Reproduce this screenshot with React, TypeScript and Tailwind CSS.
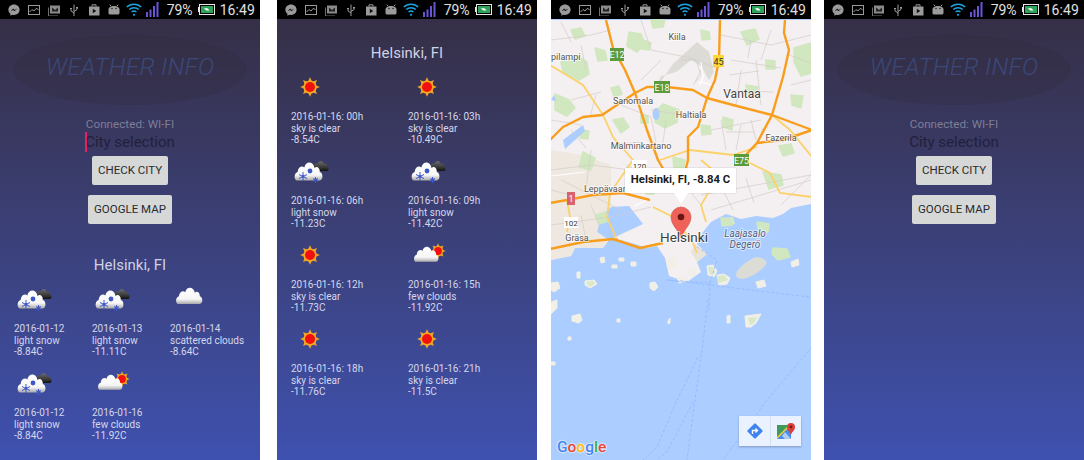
import type { ReactNode } from "react";

const font = { fontFamily: "Roboto, sans-serif" };

function StatusBar() {
  return (
    <div className="flex h-[19px] shrink-0 items-center bg-black pl-[8px] pr-[5px]">
      <div className="flex items-center gap-[8px]">
        <svg width="12" height="12" viewBox="0 0 12 12">
          <path d="M6 .5C2.8.5.4 2.8.4 5.7c0 1.6.7 3 2 4v2l1.9-1c.5.1 1.1.2 1.7.2 3.2 0 5.6-2.3 5.6-5.2S9.2.5 6 .5z" fill="#9b9b9b" />
          <path d="M2.6 7.3 5.2 4.6l1.5 1.4 2.6-1.4L6.7 7.3 5.2 5.9z" fill="#111" />
        </svg>
        <svg width="12" height="12" viewBox="0 0 12 12" fill="none">
          <rect x=".5" y="1.5" width="11" height="9" stroke="#9b9b9b" />
          <path d="M1.5 8 4 5.5l2 1.5 2-2.5 2.5 1" stroke="#9b9b9b" />
        </svg>
        <svg width="12" height="12" viewBox="0 0 12 12">
          <path d="M2 1.5h10v8H2z" fill="#8b8b8b" />
          <path d="M0 3.5h1v8h9v1H0z" fill="#6f6f6f" />
          <path d="M4 3.5v4h6v-4L7 6z" fill="#222" />
        </svg>
        <svg width="12" height="12" viewBox="0 0 12 12" fill="none" stroke="#9b9b9b">
          <path d="M6 .5V12M6 9 3 7V4.5M6 7.5l3-2V4" />
          <path d="M2 4h2v1H2zM8 3h2v1.5H8z" fill="#9b9b9b" stroke="none" />
        </svg>
        <svg width="12" height="12" viewBox="0 0 12 12">
          <path d="M4 2.5V.8h4v1.7" fill="none" stroke="#9b9b9b" />
          <path d="M1 2.5h10.5v9H1z" fill="#9b9b9b" />
          <path d="M4.8 4.8 8.3 7 4.8 9.2z" fill="#111" />
        </svg>
        <svg width="12" height="12" viewBox="0 0 12 12">
          <path d="M3 2 1.8.6M9 2 10.2.6" stroke="#9b9b9b" />
          <path d="M.5 5.5C.5 3.5 3 2 6 2s5.500 1.500 5.500 3.500V9c0 1-1 1.500-2 1.500H2.500c-1 0-2-.5-2-1.500z" fill="#9b9b9b" />
          <circle cx="4" cy="4.5" r=".7" fill="#111" />
          <circle cx="8" cy="4.5" r=".7" fill="#111" />
        </svg>
      </div>
      <div className="ml-auto flex items-center">
        <svg width="16" height="15" viewBox="0 0 16 15" fill="none" stroke="#1ba3dd" strokeWidth="1.5">
          <path d="M.8 5C4.600 1.300 11.400 1.300 15.200 5" />
          <path d="M3.200 7.500c2.600-2.500 7-2.500 9.600 0" />
          <path d="M5.600 10c1.300-1.100 3.500-1.100 4.800 0" />
          <circle cx="8" cy="12.8" r="1.1" fill="#1ba3dd" stroke="none" />
        </svg>
        <svg className="ml-[4px]" width="13" height="15" viewBox="0 0 13 15" fill="#6a55d8">
          <rect x="0" y="10" width="2" height="5" />
          <rect x="3.5" y="7.5" width="2" height="7.5" />
          <rect x="7" y="4" width="2" height="11" />
          <rect x="10.5" y="0" width="2" height="15" />
        </svg>
        <span className="ml-[8px] text-[14px] leading-none text-[#e0e0e0]" style={font}>79%</span>
        <svg className="ml-[5px]" width="17" height="11" viewBox="0 0 17 11">
          <rect x="1.5" y=".5" width="15" height="10" fill="none" stroke="#e8e8e8" />
          <rect x="0" y="3" width="1.5" height="5" fill="#e8e8e8" />
          <rect x="3" y="2" width="12" height="7" fill="#2fa35a" />
          <path d="M6 4.200h3.500L11.500 6.500H8.500L6.500 5z" fill="#fff" />
        </svg>
        <span className="ml-[5px] text-[14px] leading-none tracking-[0.1px] text-[#e0e0e0]" style={font}>16:49</span>
      </div>
    </div>
  );
}

const cloudPath =
  "M3 18C0 18-.5 12.500 3.500 11.500 4 7.500 8 6.500 10 8 11.500 3 18.500 3 20 8.500 22 6.500 25.500 8.500 25 11.500 28.500 12 28.500 18 25 18z";

function Cloud({ x, y, sx, sy, fill = "url(#cloudFill)" }: { x: number; y: number; sx: number; sy: number; fill?: string }) {
  return (
    <g transform={`translate(${x} ${y}) scale(${sx} ${sy})`}>
      <path d={cloudPath} fill={fill} />
    </g>
  );
}

function SnowIcon() {
  return (
    <svg width="40" height="30" viewBox="0 0 40 30">
      <Cloud x={20.5} y={0.7} sx={0.62} sy={0.74} fill="url(#darkFill)" />
      <Cloud x={3} y={0} sx={1.03} sy={1.3} />
      <g stroke="#4057c8" strokeWidth="1">
        <path d="M12 15v9M8 17.500l8 4M8 21.500l8-4" />
        <path d="M24.500 20v6M22 21.500l5 3M22 24.500l5-3" />
      </g>
      <circle cx="19" cy="14" r="2.4" fill="#4057c8" />
      <circle cx="24.5" cy="23" r="1.8" fill="#4057c8" />
      <circle cx="12" cy="19.500" r="1.4" fill="#4057c8" />
    </svg>
  );
}

function Sun({ cx, cy, s = 1 }: { cx: number; cy: number; s?: number }) {
  const rays = [0, 45, 90, 135, 180, 225, 270, 315];
  return (
    <g transform={`translate(${cx} ${cy}) scale(${s})`}>
      {rays.map((r) => (
        <path key={r} d="M-2 -5.500 0 -9.800 2 -5.500z" fill="#f2a42a" transform={`rotate(${r})`} />
      ))}
      <circle r="6.6" fill="#f7a81f" />
      <circle r="5" fill="#f01010" />
    </g>
  );
}

function SunIcon() {
  return (
    <svg width="40" height="30" viewBox="0 0 40 30">
      <Sun cx={19} cy={14} />
    </svg>
  );
}

function FewCloudsIcon() {
  return (
    <svg width="40" height="30" viewBox="0 0 40 30">
      <Sun cx={30} cy={10} s={0.78} />
      <Cloud x={5.5} y={1} sx={0.9} sy={1.1} />
    </svg>
  );
}

function CloudIcon() {
  return (
    <svg width="40" height="30" viewBox="0 0 40 30">
      <Cloud x={5.5} y={-2.3} sx={0.97} sy={1.18} />
    </svg>
  );
}

type Forecast = { icon: "snow" | "sun" | "cloud" | "few"; date: string; sky: string; temp: string };

const daily: Forecast[] = [
  { icon: "snow", date: "2016-01-12", sky: "light snow", temp: "-8.84C" },
  { icon: "snow", date: "2016-01-13", sky: "light snow", temp: "-11.11C" },
  { icon: "cloud", date: "2016-01-14", sky: "scattered clouds", temp: "-8.64C" },
  { icon: "snow", date: "2016-01-12", sky: "light snow", temp: "-8.84C" },
  { icon: "few", date: "2016-01-16", sky: "few clouds", temp: "-11.92C" },
];

const hourly: Forecast[] = [
  { icon: "sun", date: "2016-01-16: 00h", sky: "sky is clear", temp: "-8.54C" },
  { icon: "sun", date: "2016-01-16: 03h", sky: "sky is clear", temp: "-10.49C" },
  { icon: "snow", date: "2016-01-16: 06h", sky: "light snow", temp: "-11.23C" },
  { icon: "snow", date: "2016-01-16: 09h", sky: "light snow", temp: "-11.42C" },
  { icon: "sun", date: "2016-01-16: 12h", sky: "sky is clear", temp: "-11.73C" },
  { icon: "few", date: "2016-01-16: 15h", sky: "few clouds", temp: "-11.92C" },
  { icon: "sun", date: "2016-01-16: 18h", sky: "sky is clear", temp: "-11.76C" },
  { icon: "sun", date: "2016-01-16: 21h", sky: "sky is clear", temp: "-11.5C" },
];

function ForecastItem({ item }: { item: Forecast }) {
  return (
    <div>
      <div className="h-[30px]">
        {item.icon === "snow" && <SnowIcon />}
        {item.icon === "sun" && <SunIcon />}
        {item.icon === "cloud" && <CloudIcon />}
        {item.icon === "few" && <FewCloudsIcon />}
      </div>
      <div className="mt-[8px] whitespace-nowrap text-[10px] leading-[11.5px] text-[#d5d7ec]">
        <div>{item.date}</div>
        <div>{item.sky}</div>
        <div>{item.temp}</div>
      </div>
    </div>
  );
}

function Phone({ className, children }: { className?: string; children: ReactNode }) {
  return (
    <div
      className={`flex h-[460px] w-[260px] shrink-0 flex-col bg-gradient-to-b from-[#352d42] to-[#3f51b0] ${className ?? ""}`}
      style={font}
    >
      <StatusBar />
      {children}
    </div>
  );
}

function Home({ cursor, children }: { cursor?: boolean; children?: ReactNode }) {
  return (
    <div className="flex flex-col items-center">
      <div className="mt-[16px] flex h-[70px] w-[234px] items-center justify-center rounded-[50%] bg-[#2c2830]/20">
        <span className="-translate-y-[3px] text-[24.5px] font-light italic tracking-[0.2px] text-[#3b4878]">WEATHER INFO</span>
      </div>
      <div className="mt-[12px] h-[14px] text-[11.7px] leading-[14px] text-[#7d7e99]">Connected: WI-FI</div>
      <div className="relative mt-[1px] h-[20px] text-[15px] leading-[20px] text-[#22203c]">
        {cursor && <div className="absolute left-0 top-0 h-[20px] w-[1.5px] bg-[#e91e63]" />}
        City selection
      </div>
      <button className="mt-[4px] h-[29px] w-[76px] rounded-[2px] bg-[#d6d8d7] pt-[1px] text-[11.5px] text-[#2b2b2b]">CHECK CITY</button>
      <button className="mt-[10px] h-[29px] w-[84px] rounded-[2px] bg-[#d6d8d7] pt-[1px] text-[11.5px] text-[#2b2b2b]">GOOGLE MAP</button>
      {children}
    </div>
  );
}

const greens = [
  "M78 32l12 2 4 10-8 8-10-6zM92 40l8 3-2 7-8-1z",
  "M10 62l16-6 10 6 2 12-10 6-16-8zM44 48l10 3 2 9-9 1z",
  "M112 104l16 6-2 12-12 6-10-6 2-12z",
  "M190 32l14-3 4 10-12 6zM243 48l17-5v30l-10 3-7-14z",
  "M4 94l14 6 6 8-8 8-12-6zM62 120l10-2 6 9-8 6z",
  "M172 117l10 3-1 10-9-3zM228 146l12-2 3 9-11 3z",
  "M32 152l12 6-4 12-12-3zM122 157l12 3-2 13-9-3z",
  "M212 172l18 3 2 10-14 4zM167 177l12-3 3 11-9 4z",
  "M150 30l8 2 1 7-8 1zM20 30l10-2 4 8-10 3zM100 20l14 0-2 7-10 1z",
  "M195 85l12 2-1 8-10-1zM240 95l12 1-2 12-9-3zM60 88l8-2 3 8-8 3z",
  "M150 125l9 1 1 8-9 1zM215 60l9 1 0 8-9 0zM30 130l8 1-1 8-8-1z",
  "M90 115l7 1 0 7-7 0zM45 215l9-3 3 9-9 3zM95 185l9 1-1 8-8 0z",
  "M222 248l14 1 3 8-12 3-6-6zM170 218l10 1 1 6-10 1zM206 222l12 2-1 8-10-2z",
];

const islands = [
  "M166 275l7-1 6 4-3 6-8 1z",
  "M156 266l6-1 4 6-3 6-6-2z",
  "M99 283l5-1 3 5-4 4-4-3z",
  "M34 281l9-1 3 4-7 4-5-3z",
  "M0 283l7-1 2 6-6 4-3-2z",
  "M49 258l4-1 1 5-4 1z",
  "M61 265l5 0 0 3-5 0z",
  "M68 258l5 0 0 3-5 0z",
  "M26 272l3 0 0 6-3 0z",
  "M21 316l8-2 2 6-3 3-7-2z",
  "M194 316l16-2-5 9-5 4-5 0z",
  "M176 316l3-1 0 8-3 0z",
  "M66 319l3 0 0 3-3 0z",
  "M117 321l2-3 0 5-2 1z",
  "M0 302l6-2 0 8-6 6z",
  "M0 362l4 0 0 3-4 0z",
  "M17 337l3 0 0 3-3 0z",
  "M117 260l6-3 3 7-6 6-4-4z",
  "M126 278l8-1 2 4-8 2z",
  "M138 270l6 0 1 5-6 1z",
  "M240 262l7-3 1 6-7 2z",
  "M205 282l8-2 2 6-8 2z",
  "M80 262l5 0 0 4-5 0z",
];

function MapView() {
  const orange = [
    "M55 20 62 48 74 70 84 93 96 130 107 160 114 172",
    "M-1 140 12 127 32 117 51 115 69 103 84 93 96 87 116 87 142 90 156 98 182 105 221 115 261 130",
    "M169 20 168 60 164 80 156 98 147 127 137 137 137 160 134 172",
    "M234 20 233 33 238 50 232 77 221 115 206 143 190 160",
    "M261 130 232 140 206 143",
    "M-1 203 16 200 42 195 72 193 99 200",
    "M-1 249 32 242 62 239 89 248 112 243",
  ];
  const yellow = [
    "M-1 65 32 85 52 115 62 137 82 160 59 193 56 217 66 240",
    "M109 160 139 150 182 155 206 147",
    "M221 115 239 130 261 157",
    "M102 207 122 217 142 243 146 253",
    "M199 163 219 173 229 193 261 197",
    "M16 200 19 217 16 232",
    "M150 160 168 175 150 205 155 222",
  ];
  const minor = [
    "M0 40 40 35 60 30M90 20l10 30 40 8 25 10M110 60l-20 20M20 100l30-8M0 120l30 5",
    "M170 35 220 45 260 35M180 60l50 8M190 70l-5 35M205 60l5 45M220 30l-10 30",
    "M130 60l15 0 5 15-8 10M150 70l-6 12",
    "M100 110l50 8M160 130l50-10M170 120l5 30M190 125l-5 25M200 120l5 20",
    "M0 170l40-5 40 5M40 150l-5 40M0 225l60-8 40-10M10 180l60 30M30 215l5 25",
    "M150 195l110-20M160 210l100-30M230 205l30-30M172 190l10 20M195 178l8 25",
    "M10 22l10 20M30 45l5 25M70 105l30 12 5 25M45 95l-6 22M20 130l15 18M115 120l-4 30",
    "M240 85l20-5M238 55l22 8M200 40l-3 18M178 75l30-4M172 90l50 2M175 132l28 0M212 128l-4 14",
    "M60 145l30-3M75 165l25 10M110 175l-6 18M130 180l20 25M40 205l10 25M0 190l20 5",
  ];
  const land =
    "M0 20H260V204L240 208 232 214 222 218 205 216 190 219 175 214 160 222 152 232 146 244 156 254 146 262 150 272 136 282 118 276 114 258 106 246 96 248 84 244 62 238 92 224 78 206 60 207 50 216 46 232 58 240 52 248 24 248 20 256 0 260Z";
  const halo = { paintOrder: "stroke", stroke: "#fff", strokeWidth: 2, strokeOpacity: 0.6 } as const;
  return (
    <svg className="block h-[441px] w-[260px]" viewBox="0 19 260 441" style={font}>
      <defs>
        <filter id="soft" x="-5%" y="-5%" width="110%" height="110%">
          <feGaussianBlur stdDeviation="0.5" />
        </filter>
      </defs>
      <rect x="0" y="19" width="260" height="441" fill="#abcdff" />
      <g filter="url(#soft)">
        <path d={land} fill="#f4eff0" />
        <path d="M0 260 0 150 30 155 60 165 60 207 50 216 46 232 58 240 52 248 24 248 20 256Z" fill="#ece6d9" opacity=".7" />
        {islands.map((d) => (
          <path key={d} d={d} fill="#f1efe6" stroke="#f1efe6" strokeLinejoin="round" />
        ))}
        <path d="M187 270C192 264 200 258 206 257 214 258 218 262 214 266 208 272 200 278 190 279 184 278 184 274 187 270Z" fill="#dcdcd6" />
        <path d="M170 218l12-1 2 7-12 2zM222 249l10-1 4 7-10 3zM166 276l7-1 4 5-9 3zM157 267l5 0 2 6-5 2zM35 282l7-1 2 3-6 3zM197 318l9-1-3 6-4 2z" fill="#d9e8c8" />
        {greens.map((d) => (
          <path key={d} d={d} fill="#d0e7bf" stroke="#d0e7bf" strokeLinejoin="round" strokeWidth="1.5" />
        ))}
        <path d="M106 87 122 64 146 42 158 52 163 72 158 80 150 66 140 60 125 72 110 76Z" fill="#dcdbd6" />
        <path d="M105 108a3.500 6 0 1 0 .1 0zM0 100l3-5 2 6zM12 140l20-15 2 6-20 18z" fill="#abcdff" />
        <path d="M140 252l4-8 12 10-10 8z" fill="#e8e4dc" />
        <path d={minor.join("")} fill="none" stroke="#d2cdc9" strokeWidth=".7" />
        <path d="M150 62 152 78 148 85M150 82 165 86M84 206 100 198M0 176 34 172" fill="none" stroke="#fff" strokeWidth="1.2" />
        <path d="M157 300 151 350 144 400 136 460M147 357 126 400 106 447 92 460M142 402 116 452 106 460M261 347 216 400 172 460M146 247 166 260 159 283 116 280M116 280 259 297M159 283 158 310" fill="none" stroke="#8fb8ff" strokeWidth=".8" strokeDasharray="3 2" />
        {yellow.map((d) => (
          <path key={d} d={d} fill="none" stroke="#fbd26a" strokeWidth="1.8" />
        ))}
        {orange.map((d) => (
          <path key={d} d={d} fill="none" stroke="#f89d1c" strokeWidth="2.4" strokeLinejoin="round" />
        ))}
      </g>

      <rect x="59" y="48" width="14" height="13" fill="#5c9a3c" />
      <text x="66" y="58" textAnchor="middle" fontSize="9" fill="#fff">E12</text>
      <rect x="103" y="81" width="16" height="12" fill="#5c9a3c" />
      <text x="111" y="90.5" textAnchor="middle" fontSize="9" fill="#fff">E18</text>
      <rect x="162" y="55" width="11" height="12" fill="#fdd835" />
      <text x="167.5" y="64.5" textAnchor="middle" fontSize="9" fill="#333">45</text>
      <rect x="183" y="154" width="15" height="12" fill="#5c9a3c" />
      <text x="190.5" y="163.5" textAnchor="middle" fontSize="9" fill="#fff">E75</text>
      <rect x="81" y="160" width="15" height="10" fill="#fff" />
      <text x="88.5" y="168.5" textAnchor="middle" fontSize="8" fill="#333">120</text>
      <rect x="16" y="192" width="8" height="13" fill="#d9636c" />
      <text x="20" y="202" textAnchor="middle" fontSize="9" fill="#fff">1</text>
      <rect x="13" y="217" width="14" height="11" fill="#fff" />
      <text x="20" y="226" textAnchor="middle" fontSize="8" fill="#333">102</text>

      <g fill="#555" fontSize="9" style={halo}>
        <text x="126" y="39.5" textAnchor="middle">Kiila</text>
        <text x="0" y="59.5">pilampi</text>
        <text x="82" y="103.5" textAnchor="middle">Sanomala</text>
        <text x="140" y="117.5" textAnchor="middle">Haltiala</text>
        <text x="90" y="148.5" textAnchor="middle">Malminkartano</text>
        <text x="230" y="140.5" textAnchor="middle">Fazerila</text>
        <text x="33" y="191.5">Leppävaara</text>
        <text x="26" y="240.5" textAnchor="middle">Gräsa</text>
        <text x="191" y="97.5" textAnchor="middle" fontSize="12" fill="#444">Vantaa</text>
        <text x="194" y="236.5" textAnchor="middle" fontSize="10" fontStyle="italic" fill="#4f6486">Laajasalo</text>
        <text x="194" y="247.5" textAnchor="middle" fontSize="10" fontStyle="italic" fill="#4f6486">Degerö</text>
      </g>
      <path d="M130 238C127 229 120 225 120 217a10 10 0 0 1 20 0C140 225 133 229 130 238Z" fill="#ef6259" stroke="#c9463f" strokeWidth=".5" />
      <circle cx="130" cy="217" r="3.3" fill="#6d1512" />
      <text x="133" y="241.5" textAnchor="middle" fontSize="13.5" fill="#3d3d3d" style={halo}>Helsinki</text>
    </svg>
  );
}

function DirectionsIcon() {
  return (
    <svg width="18" height="18" viewBox="0 0 18 18">
      <rect x="3.3" y="3.3" width="11.4" height="11.4" rx="1" transform="rotate(45 9 9)" fill="#3f82f0" />
      <path d="M6.500 12V8.500H11M9.500 6.500 11.500 8.500 9.500 10.500" fill="none" stroke="#fff" strokeWidth="1.4" />
    </svg>
  );
}

function MapsIcon() {
  return (
    <svg width="19" height="17" viewBox="0 0 19 17">
      <path d="M0 2h14v14H0z" fill="#3f9a5b" />
      <path d="M0 16 14 2v14z" fill="#4a8cf0" />
      <path d="M0 14 12 2h2L0 16z" fill="#f5d33f" />
      <path d="M14 16 8 9l-3 4 3 3z" fill="#dfe5ee" opacity=".7" />
      <path d="M14 12C13 8.500 10 7.500 10 4a4 4 0 0 1 8 0c0 3.500-3 4.500-4 8z" fill="#d9403a" />
      <circle cx="14" cy="4" r="1.4" fill="#7a1714" />
    </svg>
  );
}

function MapScreen({ className }: { className?: string }) {
  return (
    <div className={`relative flex h-[460px] w-[260px] shrink-0 flex-col ${className ?? ""}`} style={font}>
      <StatusBar />
      <MapView />
      <div className="absolute left-[74px] top-[168px] flex h-[25px] w-[111px] items-center justify-center whitespace-nowrap bg-white text-[11.3px] font-bold text-[#1c1c1c] shadow-[0_0_1px_rgba(0,0,0,0.3)]">
        Helsinki, FI, -8.84 C
      </div>
      <div className="absolute left-[123px] top-[193px] h-0 w-0 border-x-[7px] border-t-[11px] border-x-transparent border-t-white" />
      <div className="absolute left-[188px] top-[416px] flex h-[30px] w-[62px] bg-[#e9f2fe] shadow-[0_1px_2px_rgba(0,0,0,0.25)]">
        <div className="flex w-[32px] items-center justify-center border-r border-r-[#d5e2f5]">
          <DirectionsIcon />
        </div>
        <div className="flex flex-1 items-center justify-center">
          <MapsIcon />
        </div>
      </div>
      <div className="absolute left-[6px] top-[438px] text-[15.5px] font-medium leading-[18px] [text-shadow:0_0_2px_#fff,0_0_2px_#fff]">
        <span className="text-[#4285f4]">G</span>
        <span className="text-[#ea4335]">o</span>
        <span className="text-[#fbbc05]">o</span>
        <span className="text-[#4285f4]">g</span>
        <span className="text-[#34a853]">l</span>
        <span className="text-[#ea4335]">e</span>
      </div>
    </div>
  );
}

export default function App() {
  return (
    <div className="flex h-[460px] w-[1084px] bg-white">
      <svg className="absolute h-0 w-0">
        <defs>
          <linearGradient id="cloudFill" x1="0" y1="0" x2="0" y2="1">
            <stop offset="0" stopColor="#ffffff" />
            <stop offset=".7" stopColor="#f6f6f6" />
            <stop offset="1" stopColor="#a9a9a9" />
          </linearGradient>
          <linearGradient id="darkFill" x1="0" y1="0" x2="0" y2="1">
            <stop offset="0" stopColor="#6d6d6d" />
            <stop offset=".7" stopColor="#333333" />
            <stop offset="1" stopColor="#111111" />
          </linearGradient>
        </defs>
      </svg>

      <Phone>
        <Home cursor>
          <div className="mt-[31px] h-[20px] text-[15px] leading-[20px] text-[#cfd1e4]">Helsinki, FI</div>
          <div className="mt-[10px] grid w-full grid-cols-[78px_78px_78px] gap-y-[11.5px] pl-[14px]">
            {daily.map((item, i) => (
              <ForecastItem key={i} item={item} />
            ))}
          </div>
        </Home>
      </Phone>

      <Phone className="ml-[17px]">
        <div className="mt-[24px] h-[20px] text-center text-[15px] leading-[20px] text-[#cfd1e4]">Helsinki, FI</div>
        <div className="mt-[10px] grid grid-cols-[117px_117px] gap-y-[11.5px] pl-[14px]">
          {hourly.map((item, i) => (
            <ForecastItem key={i} item={item} />
          ))}
        </div>
      </Phone>

      <MapScreen className="ml-[14px]" />

      <Phone className="ml-[13px]">
        <Home />
      </Phone>
    </div>
  );
}
